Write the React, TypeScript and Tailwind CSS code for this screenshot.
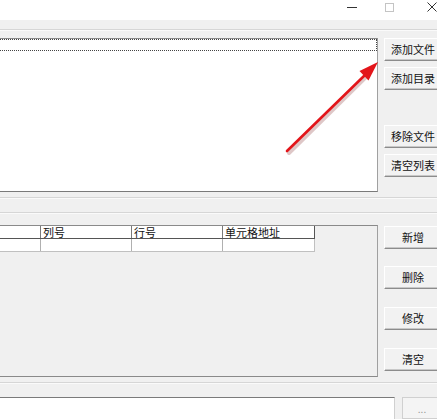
import React from "react";

const font = "font-['Noto_Sans_CJK_SC','Microsoft_YaHei',sans-serif]";

function WinButton({ label, className = "" }: { label: string; className?: string }) {
  return (
    <div
      className={`flex h-[23px] w-[58px] shrink-0 items-center justify-center border-t border-l border-t-white border-l-white border-b border-r border-b-[#8c8c8c] border-r-[#8c8c8c] bg-[#f2f2f2] text-[11px] leading-none text-[#111] shadow-[inset_0_-1px_0_#c8c8c8] ${className}`}
    >
      {label}
    </div>
  );
}

function Separator({ className = "" }: { className?: string }) {
  return (
    <div className={`flex flex-col ${className}`}>
      <div className="h-px bg-[#d6d6d6]" />
      <div className="h-px bg-[#fafafa]" />
    </div>
  );
}

const columns = [
  { title: "", w: "w-[41px]" },
  { title: "列号", w: "w-[91px]" },
  { title: "行号", w: "w-[91px]" },
  { title: "单元格地址", w: "w-[91px]" },
];

export default function App() {
  return (
    <div className={`relative flex h-[419px] w-[437px] flex-col overflow-hidden bg-[#f0f0f0] ${font}`}>
      {/* Title bar */}
      <div className="flex h-[20px] shrink-0 items-start bg-white pt-[2px]">
        <div className="ml-[347px] mt-[5px] h-px w-[10px] bg-[#333]" />
        <div className="ml-[28px] mt-px h-[9px] w-[9px] border border-[#c4c4c4]" />
        <svg className="ml-[33px]" width="10" height="10" viewBox="0 0 10 10">
          <path d="M0.5 0.5 L9.5 9.5 M9.5 0.5 L0.5 9.5" stroke="#333" strokeWidth="1" fill="none" />
        </svg>
      </div>

      <div className="h-[9px] shrink-0" />
      <Separator />

      {/* File list */}
      <div className="mt-[7px] flex shrink-0">
        <div className="h-[154px] w-[378px] shrink-0 border-t border-r border-b border-t-[#8a8a8a] border-r-[#a0a0a0] border-b-[#7a7a7a] bg-white">
          <div className="h-[12px] border border-dotted border-[#444] border-l-0" />
        </div>
        <div className="ml-[6px] flex flex-col">
          <WinButton label="添加文件" />
          <WinButton label="添加目录" className="mt-[6px]" />
          <WinButton label="移除文件" className="mt-[35px]" />
          <WinButton label="清空列表" className="mt-[6px]" />
        </div>
      </div>

      <Separator className="mt-[5px]" />
      <Separator className="mt-[13px]" />

      {/* Cell list */}
      <div className="mt-[11px] flex shrink-0">
        <div className="h-[152px] w-[378px] shrink-0 border-t border-r border-b border-t-[#8a8a8a] border-r-[#a0a0a0] border-b-[#8a8a8a] bg-[#f0f0f0]">
          <div className="flex h-[13px] w-[315px] border-b border-r border-b-[#555] border-r-[#555] bg-white text-[11px] leading-[12px] text-[#111]">
            {columns.map((c, i) => (
              <div
                key={i}
                className={`${c.w} shrink-0 whitespace-nowrap pl-[2px] ${i < columns.length - 1 ? "border-r border-[#7a7a7a]" : ""}`}
              >
                {c.title}
              </div>
            ))}
          </div>
          <div className="flex h-[13px] w-[315px] border-b border-r border-[#c0c0c0] bg-white">
            {columns.map((c, i) => (
              <div
                key={i}
                className={`${c.w} shrink-0 ${i < columns.length - 1 ? "border-r border-[#b0b0b0]" : ""}`}
              />
            ))}
          </div>
        </div>
        <div className="ml-[6px] flex flex-col">
          <WinButton label="新增" className="mt-px h-[22px]" />
          <WinButton label="删除" className="mt-[17px] h-[22px]" />
          <WinButton label="修改" className="mt-[18px] h-[22px]" />
          <WinButton label="清空" className="mt-[18px] h-[22px]" />
        </div>
      </div>

      <Separator className="mt-[5px]" />

      {/* Path box */}
      <div className="mt-[13px] flex flex-1">
        <div className="w-[395px] shrink-0 border-t border-r border-t-[#7a7a7a] border-r-[#d0d0d0] bg-white" />
        <div className="ml-[7px] flex w-[40px] shrink-0 items-start justify-center border border-[#d0d0d0] bg-[#f4f4f4] pt-[6px] text-[10px] leading-none text-[#999]">
          ...
        </div>
      </div>

      {/* Annotation arrow */}
      <svg className="pointer-events-none absolute left-0 top-0" width="437" height="419" viewBox="0 0 437 419">
        <line x1="288" y1="152" x2="365" y2="76" stroke="#7a2020" strokeOpacity="0.25" strokeWidth="4" strokeLinecap="round" transform="translate(1 1)" />
        <line x1="287" y1="151" x2="365" y2="75" stroke="#e3151a" strokeWidth="2.6" strokeLinecap="round" />
        <polygon points="378,62 368.5,80.5 359.5,71" fill="#e3151a" />
      </svg>
    </div>
  );
}
